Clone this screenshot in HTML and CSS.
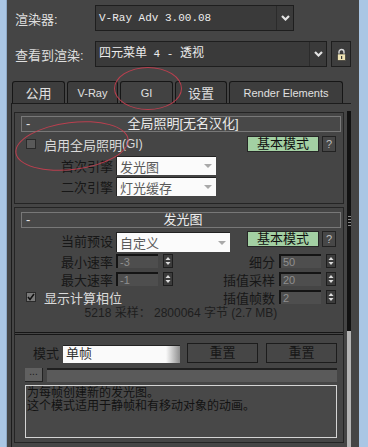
FILE: index.html
```html
<!DOCTYPE html>
<html lang="zh-CN">
<head>
  <meta charset="UTF-8">
  <meta name="viewport" content="width=device-width, initial-scale=1.0">
  <title>渲染设置</title>
  <link rel="stylesheet" href="styles.css">
</head>
<body>
  <div class="edge edge-left"></div>

  <div class="window">
    <div class="setup-row first">
      <span class="setup-label">渲染器:</span>
      <div class="combo renderer">
        <span class="combo-text">V-Ray Adv 3.00.08</span>
        <span class="combo-arrow">
          <svg width="9" height="6" viewBox="0 0 9 6"><polyline points="1,1 4.5,4.5 8,1" fill="none" stroke="#e2e2e2" stroke-width="2.2"/></svg>
        </span>
      </div>
    </div>

    <div class="setup-row">
      <span class="setup-label">查看到渲染:</span>
      <div class="combo view">
        <span class="combo-text"><span class="cjk">四元菜单</span> 4 - <span class="cjk">透视</span></span>
        <span class="combo-arrow">
          <svg width="9" height="6" viewBox="0 0 9 6"><polyline points="1,1 4.5,4.5 8,1" fill="none" stroke="#e2e2e2" stroke-width="2.2"/></svg>
        </span>
      </div>
      <div class="lock-btn">
        <svg width="11" height="13" viewBox="0 0 11 13">
          <path d="M3 6.5 V4 a2.5 2.5 0 0 1 5 0 V6.5" fill="none" stroke="#d8d8d8" stroke-width="1.4"/>
          <rect x="1.5" y="6" width="8" height="6.5" fill="#efe4b4" stroke="#2a2a2a" stroke-width="0.6"/>
          <rect x="5" y="8" width="1.2" height="3" fill="#3a3a3a"/>
        </svg>
      </div>
    </div>

    <div class="tabs">
      <div class="tab">公用</div>
      <div class="tab latin">V-Ray</div>
      <div class="tab latin active">GI</div>
      <div class="tab">设置</div>
      <div class="tab latin wide">Render Elements</div>
    </div>

    <div class="page">
      <div class="rollouts">
        <!-- 全局照明 -->
        <section class="rollout">
          <div class="rollout-head">
            <span class="minus">-</span>
            <span class="rollout-title">全局照明[无名汉化]</span>
          </div>
          <div class="line">
            <div class="check"><span class="box"></span>启用全局照明<span class="latin-small">(GI)</span></div>
            <div class="mode-btns">
              <div class="green-btn">基本模式</div>
              <div class="help-btn">?</div>
            </div>
          </div>
          <div class="field-row engine">
            <span class="dark-label">首次引擎</span>
            <div class="white-combo">发光图<span class="tri"></span></div>
          </div>
          <div class="field-row engine second">
            <span class="dark-label">二次引擎</span>
            <div class="white-combo">灯光缓存<span class="tri"></span></div>
          </div>
        </section>

        <!-- 发光图 -->
        <section class="rollout irradiance">
          <div class="rollout-head">
            <span class="minus">-</span>
            <span class="rollout-title">发光图</span>
          </div>
          <div class="preset-row">
            <span class="dark-label">当前预设</span>
            <div class="white-combo preset">自定义<span class="tri"></span></div>
            <div class="mode-btns">
              <div class="green-btn">基本模式</div>
              <div class="help-btn">?</div>
            </div>
          </div>

          <div class="spin-grid">
            <div class="spin-row">
              <span class="dark-label">最小速率</span>
              <span class="num">-3</span>
              <span class="spin"><svg width="8" height="12" viewBox="0 0 8 12"><polygon points="1.5,5 4,2 6.5,5" fill="#dcdcdc"/><polygon points="1.5,7 4,10 6.5,7" fill="#dcdcdc"/></svg></span>
            </div>
            <div class="spin-row right">
              <span class="dark-label">细分</span>
              <span class="num">50</span>
              <span class="spin"><svg width="8" height="12" viewBox="0 0 8 12"><polygon points="1.5,5 4,2 6.5,5" fill="#dcdcdc"/><polygon points="1.5,7 4,10 6.5,7" fill="#dcdcdc"/></svg></span>
            </div>
            <div class="spin-row">
              <span class="dark-label">最大速率</span>
              <span class="num">-1</span>
              <span class="spin"><svg width="8" height="12" viewBox="0 0 8 12"><polygon points="1.5,5 4,2 6.5,5" fill="#dcdcdc"/><polygon points="1.5,7 4,10 6.5,7" fill="#dcdcdc"/></svg></span>
            </div>
            <div class="spin-row right">
              <span class="dark-label">插值采样</span>
              <span class="num">20</span>
              <span class="spin"><svg width="8" height="12" viewBox="0 0 8 12"><polygon points="1.5,5 4,2 6.5,5" fill="#dcdcdc"/><polygon points="1.5,7 4,10 6.5,7" fill="#dcdcdc"/></svg></span>
            </div>
            <div class="check phase">
              <span class="box checked">
                <svg width="8" height="8" viewBox="0 0 8 8"><polyline points="1,4 3,6.5 7,1" fill="none" stroke="#111" stroke-width="1.6"/></svg>
              </span>显示计算相位
            </div>
            <div class="spin-row right">
              <span class="dark-label">插值帧数</span>
              <span class="num">2</span>
              <span class="spin"><svg width="8" height="12" viewBox="0 0 8 12"><polygon points="1.5,5 4,2 6.5,5" fill="#dcdcdc"/><polygon points="1.5,7 4,10 6.5,7" fill="#dcdcdc"/></svg></span>
            </div>
          </div>

          <div class="stats">5218 采样： 2800064 字节 (2.7 MB)</div>

          <div class="separator"></div>

          <div class="mode-row">
            <span class="dark-label short">模式</span>
            <div class="mode-combo">单帧</div>
            <div class="reset-btn">重置</div>
            <div class="reset-btn">重置</div>
          </div>
          <div class="file-row">
            <div class="dots-btn">...</div>
            <div class="file-field"></div>
          </div>
          <div class="note">为每帧创建新的发光图。<br>这个模式适用于静帧和有移动对象的动画。</div>
        </section>
      </div>
      <div class="scrollbar">
        <div class="thumb"><span class="grip"></span></div>
      </div>
    </div>
  </div>

  <div class="edge edge-right"></div>

  <div class="mark mark-tab"></div>
  <div class="mark mark-check"></div>
</body>
</html>
```

FILE: styles.css
```css
* {
  box-sizing: border-box;
}

body {
  margin: 0;
  width: 368px;
  height: 447px;
  overflow: hidden;
  position: relative;
  display: flex;
  background: #454545;
  font-family: "Liberation Sans", "Noto Sans CJK SC", sans-serif;
  font-size: 13px;
  color: #e2e2e2;
}

/* window edges */
.edge {
  flex: none;
  background: #aac6e4;
}

.edge-left {
  width: 7px;
  border-right: 1px solid #8fa9c6;
}

.edge-right {
  width: 9px;
}

.window {
  flex: none;
  width: 352px;
  display: flex;
  flex-direction: column;
}

/* renderer rows */
.setup-row {
  display: flex;
  align-items: center;
  height: 26px;
  margin-top: 10px;
  padding-left: 8px;
}

.setup-row.first {
  margin-top: 5px;
}

.setup-label {
  width: 80px;
  color: #dedede;
}

.combo {
  display: flex;
  height: 26px;
  background: #3a3a3a;
  border: 1px solid #1e1e1e;
}

.renderer {
  width: 199px;
}

.view {
  width: 232px;
}

.combo-text {
  flex: 1;
  padding-left: 3px;
  font-family: "Liberation Mono", "Noto Sans CJK SC", monospace;
  font-size: 11px;
  line-height: 24px;
  color: #ececec;
  white-space: pre;
}

.combo-text .cjk {
  font-size: 12px;
}

.combo-arrow {
  width: 17px;
  border-left: 1px solid #2b2b2b;
  display: flex;
  align-items: center;
  justify-content: center;
}

.lock-btn {
  width: 20px;
  height: 26px;
  margin-left: 4px;
  background: #3d3d3d;
  border: 1px solid #1e1e1e;
  display: flex;
  align-items: center;
  justify-content: center;
}

/* tabs */
.tabs {
  display: flex;
  gap: 2px;
  height: 22px;
  margin-top: 14px;
  padding-left: 5px;
}

.tab {
  width: 53px;
  height: 22px;
  border: 1px solid #161616;
  border-bottom: none;
  border-radius: 3px 3px 0 0;
  background: #3d3d3d;
  display: flex;
  align-items: center;
  justify-content: center;
  color: #e0e0e0;
}

.tab:nth-child(2) {
  width: 51px;
}

.tab:nth-child(4) {
  width: 52px;
}

.tab.latin {
  font-size: 11px;
}

.tab.active {
  background: #424242;
}

.tab.wide {
  width: 114px;
}

/* tab page */
.page {
  flex: 1;
  display: flex;
  margin: 0 8px 0 4px;
  border-top: 1px solid #1c1c1c;
  border-left: 1px solid #1c1c1c;
}

.rollouts {
  width: 330px;
  margin: 8px 0 0 2px;
}

.scrollbar {
  width: 4px;
  margin: 7px 0 0 3px;
  background: #b4b4b4;
}

.thumb {
  height: 220px;
  background: #111111;
  display: flex;
  align-items: center;
  justify-content: center;
}

.grip {
  width: 3px;
  height: 11px;
  background: repeating-linear-gradient(#8a8a8a 0 1px, transparent 1px 3px);
}

/* rollouts */
.rollout {
  border: 1px solid #242424;
  padding: 3px 2px 7px 6px;
}

.rollout + .rollout {
  margin-top: 3px;
}

.irradiance {
  padding-top: 4px;
  padding-bottom: 4px;
}

.rollout-head {
  height: 16px;
  border: 1px solid #787878;
  background: #484848;
  display: grid;
  grid-template-columns: 20px 1fr 20px;
  align-items: center;
  padding-left: 4px;
  line-height: 14px;
}

.minus {
  color: #e6e6e6;
}

.rollout-title {
  text-align: center;
  color: #ececec;
}

.line {
  display: flex;
  align-items: center;
  justify-content: space-between;
  height: 16px;
  margin-top: 4px;
  padding: 0 5px;
}

.check {
  display: flex;
  align-items: center;
  gap: 8px;
  color: #dadada;
}

.latin-small {
  font-size: 12px;
  margin-left: -8px;
}

.box {
  width: 10px;
  height: 10px;
  background: #595959;
  border: 1px solid #2a2a2a;
  display: flex;
  align-items: center;
  justify-content: center;
}

.box.checked {
  background: #7a7a7a;
}

.mode-btns {
  display: flex;
  gap: 3px;
}

.green-btn {
  width: 72px;
  height: 16px;
  background: #a3d0a3;
  border: 1px solid #262626;
  color: #111111;
  text-align: center;
  line-height: 14px;
}

.help-btn {
  width: 14px;
  height: 16px;
  background: #474747;
  border: 1px solid #222222;
  color: #bdbdbd;
  font-size: 11px;
  text-align: center;
  line-height: 14px;
}

.field-row {
  display: flex;
  align-items: center;
  height: 19px;
  margin-top: 4px;
}

.field-row.second {
  margin-top: 2px;
}

.dark-label {
  width: 92px;
  margin-right: 3px;
  text-align: right;
  color: #171717;
}

.white-combo {
  width: 100px;
  height: 19px;
  background: #fbfbfb;
  border-top: 1px solid #222222;
  border-left: 1px solid #222222;
  display: flex;
  align-items: center;
  justify-content: space-between;
  padding: 0 4px 0 3px;
  color: #5a5a5a;
}

.tri {
  width: 0;
  height: 0;
  border-left: 4px solid transparent;
  border-right: 4px solid transparent;
  border-top: 4px solid #a9a9a9;
}

.preset-row {
  display: flex;
  align-items: flex-start;
  height: 21px;
  margin-top: 3px;
}

.preset-row .dark-label {
  line-height: 22px;
}

.white-combo.preset {
  width: 114px;
  height: 20px;
  margin-top: 1px;
}

.preset-row .mode-btns {
  margin-left: auto;
  margin-right: 5px;
}

/* spinners */
.spin-grid {
  display: grid;
  grid-template-columns: 152px 163px;
  row-gap: 4px;
  margin-top: 2px;
}

.spin-row {
  display: flex;
  align-items: center;
  height: 14px;
}

.spin-row.right .dark-label {
  flex: 1;
  width: auto;
  margin-right: 4px;
}

.num {
  width: 42px;
  height: 14px;
  background: #4e4e4e;
  border-top: 2px solid #141414;
  border-left: 2px solid #141414;
  color: #8e8e8e;
  font-size: 11px;
  line-height: 12px;
  padding-left: 2px;
}

.spin {
  width: 10px;
  height: 14px;
  margin-left: 5px;
  background: #3b3b3b;
  border: 1px solid #1e1e1e;
  display: flex;
  align-items: center;
  justify-content: center;
}

.check.phase {
  padding-left: 5px;
  height: 14px;
}

.stats {
  height: 14px;
  margin-top: 2px;
  text-align: center;
  font-size: 12px;
  line-height: 14px;
  color: #1e1e1e;
}

.separator {
  height: 3px;
  margin: 12px -2px 0 -6px;
  border-top: 1px solid #161616;
  border-bottom: 1px solid #161616;
}

/* mode group */
.mode-row {
  display: flex;
  align-items: flex-end;
  height: 20px;
  margin-top: 8px;
  padding-left: 12px;
}

.dark-label.short {
  width: 30px;
  margin-right: 0;
  text-align: left;
  line-height: 18px;
}

.mode-combo {
  width: 117px;
  height: 18px;
  background: linear-gradient(to right, #fafafa 0, #fafafa 88%, #8e8e8e 100%);
  border-top: 1px solid #222222;
  color: #333333;
  padding-left: 3px;
  line-height: 16px;
}

.reset-btn {
  width: 71px;
  height: 20px;
  margin-left: 7px;
  background: #464646;
  border: 1px solid #1c1c1c;
  color: #161616;
  text-align: center;
  line-height: 18px;
}

.reset-btn:last-child {
  margin-left: 8px;
}

.file-row {
  display: flex;
  height: 14px;
  margin-top: 5px;
  padding-left: 4px;
}

.dots-btn {
  width: 18px;
  height: 14px;
  background: #606060;
  border-right: 1px solid #222222;
  border-bottom: 1px solid #222222;
  color: #1a1a1a;
  font-size: 10px;
  line-height: 8px;
  text-align: center;
}

.file-field {
  width: 290px;
  margin-left: 4px;
  background: #5a5a5a;
  border-top: 2px solid #202020;
}

.note {
  width: 312px;
  height: 53px;
  margin: 3px 0 0 4px;
  border: 1px solid #d4d4d4;
  background: #484848;
  color: #121212;
  font-size: 12px;
  line-height: 13px;
  padding: 1px;
}

/* red annotation rings */
.mark {
  position: absolute;
  border: 1.5px solid rgba(206, 62, 80, 0.85);
  border-radius: 50%;
  pointer-events: none;
}

.mark-tab {
  left: 114px;
  top: 67px;
  width: 68px;
  height: 43px;
}

.mark-check {
  left: 15px;
  top: 122px;
  width: 114px;
  height: 48px;
  transform: rotate(-7deg);
}
```
